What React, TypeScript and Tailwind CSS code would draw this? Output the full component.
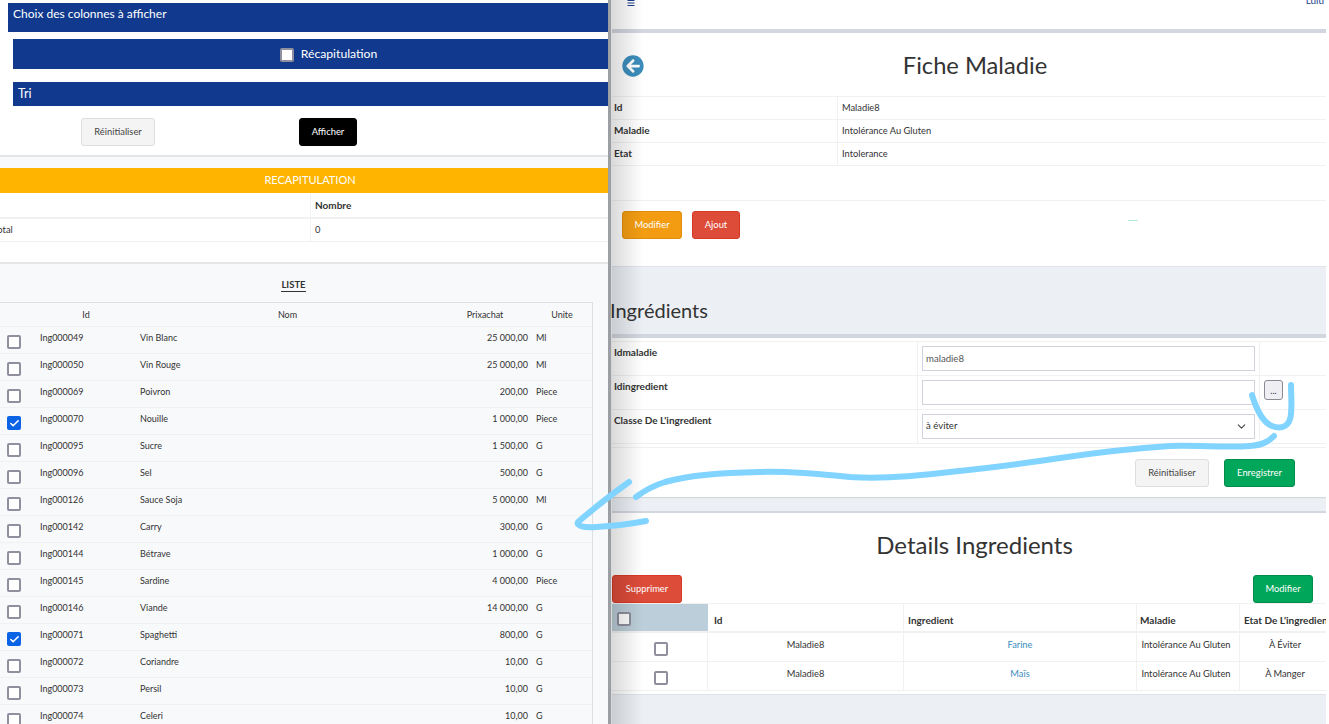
import React from 'react';
import { FaArrowCircleLeft, FaBars } from 'react-icons/fa';
import { ChevronDown, Check as CheckIcon } from 'lucide-react';

const rows = [
  ['Ing000049', 'Vin Blanc', '25 000,00', 'Ml', false],
  ['Ing000050', 'Vin Rouge', '25 000,00', 'Ml', false],
  ['Ing000069', 'Poivron', '200,00', 'Piece', false],
  ['Ing000070', 'Nouille', '1 000,00', 'Piece', true],
  ['Ing000095', 'Sucre', '1 500,00', 'G', false],
  ['Ing000096', 'Sel', '500,00', 'G', false],
  ['Ing000126', 'Sauce Soja', '5 000,00', 'Ml', false],
  ['Ing000142', 'Carry', '300,00', 'G', false],
  ['Ing000144', 'Bétrave', '1 000,00', 'G', false],
  ['Ing000145', 'Sardine', '4 000,00', 'Piece', false],
  ['Ing000146', 'Viande', '14 000,00', 'G', false],
  ['Ing000071', 'Spaghetti', '800,00', 'G', true],
  ['Ing000072', 'Coriandre', '10,00', 'G', false],
  ['Ing000073', 'Persil', '10,00', 'G', false],
  ['Ing000074', 'Celeri', '10,00', 'G', false],
] as const;

const Check = ({ on = false }: { on?: boolean }) =>
  on ? (
    <span className="w-[14px] h-[14px] rounded-[2px] bg-[#0b63e5] flex items-center justify-center">
      <CheckIcon className="w-[11px] h-[11px] text-white" strokeWidth={3.5} />
    </span>
  ) : (
    <span className="block w-[14px] h-[14px] rounded-[2px] border-2 border-[#8f8f9d] bg-white" />
  );

const Btn = ({ label, className }: { label: string; className: string }) => (
  <button className={`h-[28px] rounded-[3px] border text-[9.4px] flex items-center justify-center ${className}`}>{label}</button>
);

const listCols = 'grid grid-cols-[40px_100px_295px_93px_8px_56px]';

const LeftPanel = () => (
  <div className="w-[608px] shrink-0 h-full overflow-hidden bg-white text-[#333]">
    <div className="pt-[3px] pl-[8px]">
      <div className="h-[29px] bg-[#113a8f] text-white text-[12px] pl-[5px] pt-[2px]">Choix des colonnes à afficher</div>
    </div>
    <div className="pt-[7px] pl-[13px]">
      <div className="h-[30px] bg-[#113a8f] text-white text-[12.2px] flex items-center justify-center gap-[7px] pl-[36px] pt-[1px]">
        <Check />
        <span>Récapitulation</span>
      </div>
      <div className="h-[24px] mt-[13px] bg-[#113a8f] text-white text-[12.5px] pl-[5px] flex items-center">Tri</div>
    </div>
    <div className="h-[51px] border-b-2 border-[#e4e5e7] flex items-start pt-[12px] pl-[81px]">
      <Btn label="Réinitialiser" className="w-[74px] bg-[#f4f4f4] border-[#ddd] text-[#444]" />
      <Btn label="Afficher" className="w-[58px] ml-[144px] bg-black border-black text-white" />
    </div>
    <div className="h-[11px] bg-[#f8f9fb]" />
    <div className="h-[25px] bg-[#ffb400] text-white text-[11px] flex items-center justify-center pl-[12px]">RECAPITULATION</div>
    <div className="h-[70px] border-b-2 border-[#e4e5e7] text-[10px]">
      <div className="h-[25px] mt-[1px] flex border-b-2 border-[#f1f1f1] font-bold items-center">
        <div className="w-[311px] h-full border-r border-[#f1f1f1]" />
        <div className="pl-[4px]">Nombre</div>
      </div>
      <div className="h-[23px] flex border-b border-[#f1f1f1] items-center text-[9.3px]">
        <div className="w-[311px] h-full border-r border-[#f1f1f1] flex items-center overflow-hidden">
          <span className="-ml-[7px]">Total</span>
        </div>
        <div className="pl-[4px]">0</div>
      </div>
    </div>
    <div className="bg-[#f8f9fb] h-[470px] pr-[15px]">
      <div className="h-[38px] flex justify-center items-end pb-[10px] pr-[6px]">
        <span className="text-[9.5px] font-bold border-b border-[#333] leading-[12px]">LISTE</span>
      </div>
      <div className="border-t border-r border-[#dcdfe3] text-[9px]">
        <div className={`${listCols} h-[24px] border-b border-[#f0f1f3] items-center`}>
          <div />
          <div className="text-center pr-[8px]">Id</div>
          <div className="text-center">Nom</div>
          <div className="text-center pl-[7px]">Prixachat</div>
          <div />
          <div className="text-center pr-[4px]">Unite</div>
        </div>
        {rows.map(([id, nom, prix, unite, on]) => (
          <div key={id} className={`${listCols} h-[27px] border-b border-[#f0f1f3]`}>
            <div className="pl-[7px] pt-[8px]"><Check on={on} /></div>
            <div className="pt-[4px]">{id}</div>
            <div className="pt-[4px]">{nom}</div>
            <div className="pt-[4px] text-right">{prix}</div>
            <div />
            <div className="pt-[4px]">{unite}</div>
          </div>
        ))}
      </div>
    </div>
  </div>
);

const InfoRow = ({ k, v }: { k: string; v: string }) => (
  <div className="h-[23px] border-b border-[#f1f1f1] flex text-[9.3px]">
    <div className="w-[226px] border-r border-[#f1f1f1] pl-[2px] text-[10px] font-bold flex items-center pb-[1px]">{k}</div>
    <div className="pl-[4px] flex items-center pb-[1px]">{v}</div>
  </div>
);

const FormRow = ({ k, children, extra }: { k: string; children: React.ReactNode; extra?: React.ReactNode }) => (
  <div className="h-[34px] border-b border-[#f1f1f1] flex text-[9.6px]">
    <div className="w-[306px] border-r border-[#f1f1f1] pl-[2px] pt-[3px] text-[10px] font-bold">{k}</div>
    <div className="w-[342px] border-r border-[#f1f1f1] px-[4px] pt-[4px]">{children}</div>
    <div className="pl-[4px] pt-[4px]">{extra}</div>
  </div>
);

const detailCols = 'grid grid-cols-[96px_196px_233px_103px_90px]';

const DetailRow = ({ ing, etat }: { ing: string; etat: string }) => (
  <div className={`${detailCols} h-[29px] border-b border-[#f1f1f1] text-[9.3px] text-center`}>
    <div className="border-r border-[#f1f1f1] flex justify-center pt-[9px] pl-[2px]"><Check /></div>
    <div className="border-r border-[#f1f1f1] pt-[5px]">Maladie8</div>
    <div className="border-r border-[#f1f1f1] pt-[5px] text-[#3c8dbc]">{ing}</div>
    <div className="border-r border-[#f1f1f1] pt-[5px] pr-[4px] whitespace-nowrap">Intolérance Au Gluten</div>
    <div className="pt-[5px]">{etat}</div>
  </div>
);

const RightPanel = () => (
  <div className="flex-1 min-w-0 h-full ml-[1px] bg-[#ecf0f5] text-[#333] relative">
    <div className="h-[29px] bg-white flex justify-between text-[#1f3f8f]">
      <FaBars className="ml-[14px] -mt-[1px] w-[10px] h-[8px]" />
      <span className="text-[10px] leading-[10px] -mt-[5px] mr-[2px]">Lulu</span>
    </div>
    <div className="h-[238px] bg-white border-t-4 border-[#d2d6de] border-b border-b-[#dfe2e7]">
      <div className="h-[63px] relative flex items-center justify-center pl-[12px] pt-[2px]">
        <FaArrowCircleLeft className="absolute left-[10px] top-[22px] w-[22px] h-[22px] text-[#3c8dbc]" />
        <span className="text-[23.7px] leading-none text-[#333]">Fiche Maladie</span>
      </div>
      <div className="border-t border-[#f1f1f1]">
        <InfoRow k="Id" v="Maladie8" />
        <InfoRow k="Maladie" v="Intolérance Au Gluten" />
        <InfoRow k="Etat" v="Intolerance" />
      </div>
      <div className="h-[35px] border-b border-[#f1f1f1]" />
      <div className="relative flex gap-[10px] pl-[10px] pt-[10px]">
        <Btn label="Modifier" className="w-[60px] bg-[#f39c12] border-[#e08e0b] text-white" />
        <Btn label="Ajout" className="w-[48px] bg-[#dd4b39] border-[#d73925] text-white" />
        <span className="absolute left-[516px] top-[19px] w-[10px] h-px bg-[#b5e8dc]" />
      </div>
    </div>
    <div className="h-[67px] flex items-end pb-[14px] text-[20px] leading-none -ml-[2px]">Ingrédients</div>
    <div className="h-[163px] bg-white border-t-4 border-[#d2d6de] shadow-[0_1px_1px_rgba(0,0,0,0.1)]">
      <div className="pt-[3px] border-b border-[#f1f1f1]" />
      <FormRow k="Idmaladie">
        <input readOnly defaultValue="maladie8" className="w-full h-[25px] border border-[#d2d2dc] px-[3px] text-[9.6px] text-[#555]" />
      </FormRow>
      <FormRow
        k="Idingredient"
        extra={<button className="w-[19px] h-[20px] border border-[#8a8a94] rounded-[3px] bg-[#efeff3] text-[9px] leading-none">...</button>}
      >
        <input readOnly className="w-full h-[25px] border border-[#d2d2dc] px-[3px] text-[9.6px]" />
      </FormRow>
      <FormRow k="Classe De L'ingredient">
        <div className="w-full h-[25px] border border-[#d2d2dc] pl-[3px] pr-[6px] flex items-center justify-between">
          <span>à éviter</span>
          <ChevronDown className="w-[13px] h-[13px] text-[#444]" />
        </div>
      </FormRow>
      <div className="h-[4px] border-b border-[#f1f1f1]" />
      <div className="flex justify-end gap-[15px] pr-[31px] pt-[11px]">
        <Btn label="Réinitialiser" className="w-[74px] bg-[#f4f4f4] border-[#ddd] text-[#444]" />
        <Btn label="Enregistrer" className="w-[71px] bg-[#00a65a] border-[#008d4c] text-white" />
      </div>
    </div>
    <div className="h-[14px]" />
    <div className="h-[184px] bg-white border-t-2 border-[#d2d6de] border-b border-b-[#dfe2e7]">
      <div className="h-[62px] flex items-center justify-center text-[24px] leading-none pl-[11px] pt-[2px]">Details Ingredients</div>
      <div className="h-[28px] flex justify-between">
        <Btn label="Supprimer" className="w-[70px] bg-[#dd4b39] border-[#d73925] text-white" />
        <Btn label="Modifier" className="w-[60px] mr-[13px] bg-[#00a65a] border-[#008d4c] text-white" />
      </div>
      <div className={`${detailCols} h-[30px] border-t border-b-2 border-[#f1f1f1] text-[10px] font-bold whitespace-nowrap`}>
        <div className="bg-[#bcced9] pl-[5px] pt-[8px]"><Check /></div>
        <div className="border-r border-[#f1f1f1] pl-[6px] pt-[6px] flex items-center">Id</div>
        <div className="border-r border-[#f1f1f1] pl-[4px] pt-[6px] flex items-center">Ingredient</div>
        <div className="border-r border-[#f1f1f1] pl-[3px] pt-[6px] flex items-center">Maladie</div>
        <div className="pl-[4px] pt-[6px] flex items-center">Etat De L'ingredient</div>
      </div>
      <DetailRow ing="Farine" etat="À Éviter" />
      <DetailRow ing="Maïs" etat="À Manger" />
    </div>
  </div>
);

export default function App() {
  return (
    <div className="relative w-[1326px] h-[724px] overflow-hidden flex bg-white font-['Lato',sans-serif]">
      <LeftPanel />
      <div className="w-[3px] shrink-0 bg-[#9b9ea3]" />
      <RightPanel />
      {/* soft shadow thrown by the left window */}
      <div className="absolute left-[611px] top-0 bottom-0 w-[32px] bg-gradient-to-r from-black/15 to-transparent pointer-events-none" />
      {/* hand drawn arrow */}
      <svg className="absolute inset-0 pointer-events-none" width="1326" height="724" fill="none" stroke="#80d4ff" strokeWidth="6" strokeLinecap="round" strokeLinejoin="round">
        <path d="M1252 395 C1256 408 1262 422 1272 426 C1282 430 1290 426 1291 414 C1292 404 1291 394 1291 385" />
        <path d="M1274 436 C1268 442 1262 445 1250 446 C1225 448 1200 445 1170 446 C1140 448 1100 452 1060 458 C1020 464 990 468 950 472 C910 477 880 479 850 477 C820 474 790 471 760 472 C720 473 690 475 665 482 C652 486 644 491 636 497" />
        <path d="M629 482 C612 494 592 510 578 522 C576 526 584 528 596 527 C612 526 630 524 646 521" />
      </svg>
    </div>
  );
}
